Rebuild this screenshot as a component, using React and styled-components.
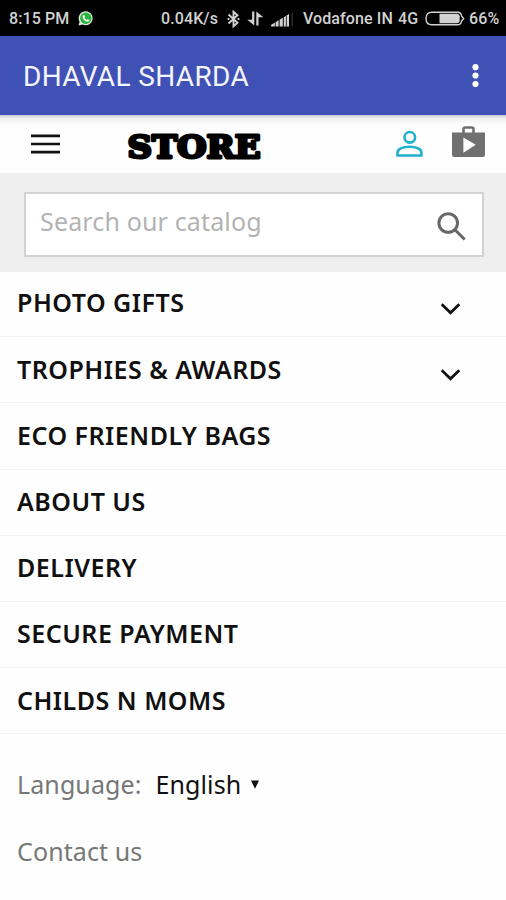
import React from 'react';
import styled, { createGlobalStyle } from 'styled-components';

const GlobalStyle = createGlobalStyle`
  * {
    box-sizing: border-box;
  }

  body {
    margin: 0;
    background: #fefefe;
    font-family: 'Noto Sans', sans-serif;
  }
`;

const Screen = styled.div`
  width: 506px;
  height: 900px;
  overflow: hidden;
  background: #fefefe;
`;

const StatusBar = styled.div`
  display: flex;
  align-items: center;
  height: 36px;
  padding: 1px 8px 0 9px;
  background: #000;
  color: #d2d2d2;
`;

const StatusText = styled.span`
  width: ${({ $width }) => $width}px;
  margin-left: ${({ $gap }) => $gap || 0}px;
  font: 500 16px/20px Roboto, sans-serif;
  letter-spacing: 0.1px;
  white-space: nowrap;
`;

const Icon = styled.svg`
  display: block;
  flex: none;
  margin-left: ${({ $gap }) => $gap || 0}px;
`;

const AppBar = styled.header`
  display: flex;
  align-items: center;
  justify-content: space-between;
  height: 79px;
  padding: 2px 27px 0 23px;
  background: #3f51b5;
`;

const AppTitle = styled.h1`
  margin: 0;
  color: #f4f5fc;
  font: 400 28px/34px Roboto, sans-serif;
  letter-spacing: 0.35px;
`;

const StoreBar = styled.div`
  display: flex;
  align-items: center;
  height: 58px;
  padding: 0 21px 0 30px;
  background: linear-gradient(#c9c9ce, #efeff0 3px, #f7f7f7 7px, #fefefe 10px);
`;

const LogoText = styled.text`
  fill: #000;
  stroke: #000;
  stroke-width: 3px;
  stroke-linejoin: round;
  font: 700 31px 'DejaVu Serif', serif;
`;

const SearchArea = styled.div`
  height: 99px;
  padding: 19px 22px 0 24px;
  background: #efefef;
`;

const SearchBox = styled.div`
  display: flex;
  align-items: center;
  justify-content: space-between;
  height: 65px;
  padding: 0 15px 0 14px;
  border: 2px solid #d2d2d2;
  background: #fff;
`;

const Placeholder = styled.span`
  margin-top: -8px;
  color: #b3b3b3;
  font-size: 25px;
  letter-spacing: 0.15px;
  line-height: 34px;
`;

const SearchButton = styled.span`
  margin-top: 4px;
`;

const Menu = styled.ul`
  margin: 0;
  padding: 0;
  list-style: none;
`;

const Label = styled.span`
  margin-top: -2.4px;
  letter-spacing: 0.5px;
`;

const MenuItem = styled.li`
  display: flex;
  align-items: center;
  justify-content: space-between;
  height: 66.2px;
  padding: 0 45px 0 17px;
  border-bottom: 1px solid #f3f3f3;
  color: #101010;
  font-size: 25px;
  font-weight: 600;
  line-height: 34px;

  &:first-child {
    height: 65.2px;
  }

  &:first-child ${Label} {
    margin-top: -4px;
  }
`;

const Chevron = styled.span`
  margin-top: 9px;
`;

const Footer = styled.footer`
  display: flex;
  flex-direction: column;
  gap: 33px;
  padding: 33px 17px 0;
  color: #777;
  font-size: 25px;
  letter-spacing: 0.1px;
  line-height: 34px;
`;

const Language = styled.div`
  display: flex;
  align-items: center;
`;

const Selected = styled.span`
  margin-left: 14px;
  color: #111;
`;

const menuItems = [
  { title: 'PHOTO GIFTS', expandable: true },
  { title: 'TROPHIES & AWARDS', expandable: true },
  { title: 'ECO FRIENDLY BAGS' },
  { title: 'ABOUT US' },
  { title: 'DELIVERY' },
  { title: 'SECURE PAYMENT' },
  { title: 'CHILDS N MOMS' },
];

const ChatIcon = () => (
  <Icon $gap={8} width="15" height="15" viewBox="0 0 15 15">
    <path d="M0.5 14.5 1.6 10.8A7 7 0 1 1 4.5 13.5Z" fill="#dcebdc" />
    <circle cx="7.8" cy="7.3" r="5.7" fill="#28b43c" />
    <path d="M5.3 4.1 6.5 4 7.2 5.8 6.5 6.7Q7.3 8.2 8.8 8.9L9.7 8 11.4 8.9Q11.3 10.8 9.4 10.8 5.4 9.9 4.5 6 4.4 4.8 5.3 4.1Z" fill="#f2f8f2" />
  </Icon>
);

const BluetoothIcon = () => (
  <Icon $gap={8} width="13" height="18" viewBox="0 0 13 18" fill="none" stroke="#d2d2d2" strokeWidth="1.9">
    <path d="M1.5 4.5 10.5 12.7 6.5 16.3V1.7L10.5 5.3 1.5 13.5" />
    <path d="M0.6 9h1.8M10.6 9h1.8" />
  </Icon>
);

const TransferIcon = () => (
  <Icon $gap={7} width="17" height="17" viewBox="0 0 17 17" fill="#d2d2d2">
    <path d="M5.1 1.5h2.2v14L0.3 9.8h4.8Z" />
    <path d="M9.3 1.5 16.3 7.2h-4.8v8.3H9.3Z" />
  </Icon>
);

const SignalIcon = () => (
  <Icon $gap={7} width="23" height="16" viewBox="0 0 23 16" fill="#d2d2d2">
    <path d="M0 15.5V14l3.8-2.4v3.9ZM4.6 11.2l3-1.9v6.2h-3ZM8.6 8.8l3.2-2v8.7H8.6ZM12.8 6.2 18 3v12.5h-5.2Z" />
    <path d="M15.4 4.6v11" stroke="#333" strokeWidth="1" />
    <path d="M20.5 2.5 22 1.5v14h-1.5Z" fill="#292929" />
  </Icon>
);

const BatteryIcon = () => (
  <Icon $gap={7} width="40" height="15" viewBox="0 0 40 15">
    <path d="M7 1.2h25.5Q36.3 1.2 36.5 5L38.7 7.5 36.5 10Q36.3 13.8 32.5 13.8H7Q1 13.8 1 7.5T7 1.2Z" fill="none" stroke="#d2d2d2" strokeWidth="1.4" />
    <path d="M14.5 2.8H32.3Q34.5 3 34.7 5.3V9.7Q34.5 12 32.3 12.2H14.5Z" fill="#d2d2d2" />
  </Icon>
);

const MoreIcon = () => (
  <Icon width="7" height="25" viewBox="0 0 7 25" fill="#fff">
    <circle cx="3.5" cy="3.2" r="3.1" />
    <circle cx="3.5" cy="11.5" r="3.1" />
    <circle cx="3.5" cy="20" r="3.1" />
  </Icon>
);

const MenuIcon = () => (
  <Icon width="31" height="20" viewBox="0 0 31 20">
    <path d="M1 1.8h29M1 10h29M1 18.2h29" stroke="#111" strokeWidth="2.7" />
  </Icon>
);

const Logo = () => (
  <Icon $gap={63} width="141" height="50" viewBox="0 0 141 50">
    <LogoText x="3.5" y="38.5" textLength="133" lengthAdjust="spacingAndGlyphs">
      STORE
    </LogoText>
  </Icon>
);

const PersonIcon = () => (
  <Icon $gap={131} width="27" height="28" viewBox="0 0 27 28" fill="none" stroke="#20afcd" strokeWidth="2.6">
    <circle cx="13.8" cy="7.3" r="5.3" />
    <path d="M1.6 25.5V22.5C1.6 14.8 25.4 14.8 25.4 22.5V25.5Z" />
  </Icon>
);

const ShopIcon = () => (
  <Icon $gap={29} width="33" height="37" viewBox="0 0 33 37">
    <path d="M11.5 7.5V3.3Q11.5 1.5 13.3 1.5h6.4Q21.5 1.5 21.5 3.3V7.5" fill="none" stroke="#707070" strokeWidth="2.6" />
    <path d="M0 6.6h33V28.5Q33 31 30.5 31H2.5Q0 31 0 28.5Z" fill="#707070" />
    <path d="M11.4 11.4v15.4L23.7 18.8Z" fill="#fff" />
  </Icon>
);

const SearchIcon = () => (
  <Icon width="30" height="30" viewBox="0 0 30 30" fill="none" stroke="#686868" strokeWidth="3">
    <circle cx="11.2" cy="11" r="9.3" />
    <path d="M17.7 17.5 27.7 27.5" />
  </Icon>
);

const ChevronIcon = () => (
  <Icon width="20" height="13" viewBox="0 0 20 13">
    <path d="M0.7 2.2 9.5 10.7 18.3 2.2" fill="none" stroke="#111" strokeWidth="2.8" />
  </Icon>
);

const DropdownIcon = () => (
  <Icon $gap={10} width="8" height="9" viewBox="0 0 8 9">
    <path d="M0 0.5h8L4 8.8Z" fill="#111" />
  </Icon>
);

const App = () => (
  <Screen>
    <GlobalStyle />
    <StatusBar>
      <StatusText $width={61}>8:15 PM</StatusText>
      <ChatIcon />
      <StatusText $width={58} $gap={68}>0.04K/s</StatusText>
      <BluetoothIcon />
      <TransferIcon />
      <SignalIcon />
      <StatusText $width={90} $gap={9}>Vodafone IN</StatusText>
      <StatusText $width={20} $gap={5}>4G</StatusText>
      <BatteryIcon />
      <StatusText $width={28} $gap={4}>66%</StatusText>
    </StatusBar>
    <AppBar>
      <AppTitle>DHAVAL SHARDA</AppTitle>
      <MoreIcon />
    </AppBar>
    <StoreBar>
      <MenuIcon />
      <Logo />
      <PersonIcon />
      <ShopIcon />
    </StoreBar>
    <SearchArea>
      <SearchBox>
        <Placeholder>Search our catalog</Placeholder>
        <SearchButton>
          <SearchIcon />
        </SearchButton>
      </SearchBox>
    </SearchArea>
    <Menu>
      {menuItems.map((item) => (
        <MenuItem key={item.title}>
          <Label>{item.title}</Label>
          {item.expandable && (
            <Chevron>
              <ChevronIcon />
            </Chevron>
          )}
        </MenuItem>
      ))}
    </Menu>
    <Footer>
      <Language>
        <span>Language:</span>
        <Selected>English</Selected>
        <DropdownIcon />
      </Language>
      <span>Contact us</span>
    </Footer>
  </Screen>
);

export default App;
